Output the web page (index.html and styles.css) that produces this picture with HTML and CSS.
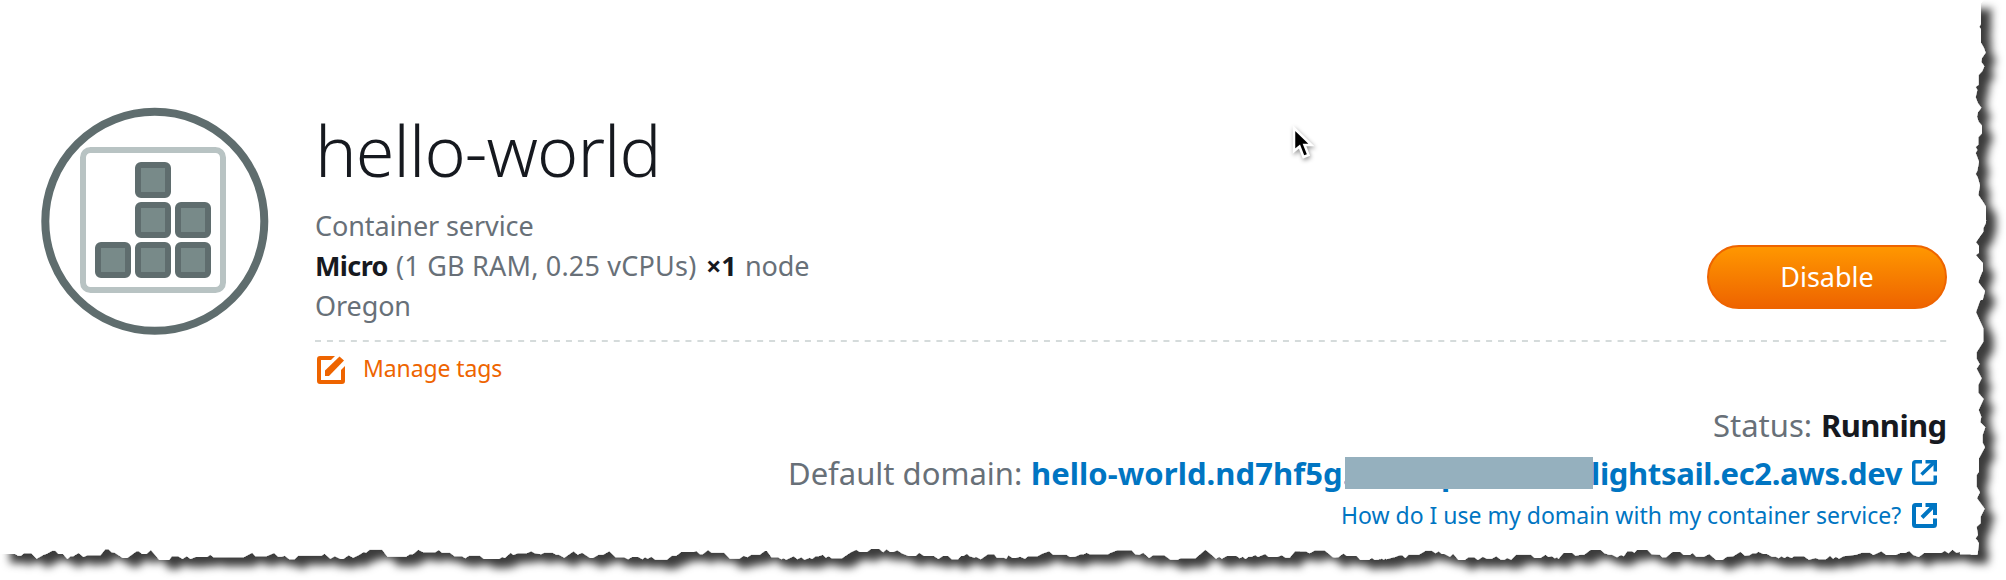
FILE: index.html
```html
<!DOCTYPE html>
<html lang="en">
<head>
<meta charset="utf-8">
<title>hello-world</title>
<link rel="stylesheet" href="styles.css">
</head>
<body>
<svg class="paper" width="2006" height="580" viewBox="0 0 2006 580" aria-hidden="true">
  <defs><filter id="shadow" filterUnits="userSpaceOnUse" x="-30" y="-30" width="2060" height="640"><feDropShadow dx="10" dy="9" stdDeviation="4" flood-color="#000" flood-opacity=".77"/></filter></defs>
  <g filter="url(#shadow)" fill="#fff">
    <path d="M0 0H1975V549H0Z"/>
    <path transform="translate(1940 0) scale(.3333)" d="M60 0H131L123 10V72L118 80L123 88V128L132 144L137 158L126 174L124 186L133 199L127 213L116 225V254L107 261L112 270L107 292L114 310L124 323L114 337L111 350L116 365L126 377V400L115 412V434L107 441L112 450L107 459L112 472L117 485L112 512L107 522L113 532L120 556L115 585L129 605L138 620V668L130 685V695L107 726L117 738V758L107 766L129 790V812L122 820L115 847L135 873L128 900H60Z"/>
    <path transform="translate(1660 220) scale(.3333)" d="M900 0H979L969 18V35L947 68L957 86L947 105L968 130V152L954 187L974 213L958 248L948 277L970 325V365L950 397V416L959 432L950 446L965 475L955 495V518L971 537L956 570L964 590L961 607L976 622L968 645V668L975 682L957 715V755L950 765V800L960 817L951 835L974 866L962 890V910L950 920L954 945L947 955L957 970L953 1003H900Z"/>
    <path transform="translate(0 530) scale(.4464 .3333)" d="M0 30V72H34L40 77H47L54 70H70L82 86L98 74L105 71L117 62H124L131 72H141L151 87L158 79L164 79L176 69L187 81L196 76H225L236 58H243L250 67L257 68L275 84H285L306 64H311L318 72H328L338 60L357 90H379L385 79H399L409 87L418 79L427 87L438 81H464L471 74L478 82H546L565 68L572 79H597L614 69L623 80H631L638 77L648 88H660L668 77H720L727 71L740 86L750 79L763 87H769L781 76L791 83L803 76L815 66L820 68L828 59H856L868 80H910L918 73H925L937 59L948 67H975L983 60L990 68H1008L1018 79H1035L1042 85L1051 77H1075L1084 87H1118L1125 81L1131 84L1144 68L1150 75L1160 70H1180L1190 64L1198 70L1212 73L1219 68H1238L1246 74H1252L1264 83L1285 64L1294 74L1304 68L1322 84H1328L1341 74H1351L1365 64L1379 82H1398L1407 88L1416 81H1430L1439 88L1445 82L1451 86L1459 80L1468 89H1494L1505 77H1515L1526 66H1554L1560 63L1568 73V30Z"/>
    <path transform="translate(700 530) scale(.4464 .3333)" d="M0 30V73H6L18 60L26 68H54L67 86H88L98 77L106 82L115 74H134L145 63H150L160 82H175L182 88L187 85L193 89L210 79L218 88L227 82L234 89L246 83L251 87L259 79H266L275 74L282 83L288 79L295 85H318L338 67L350 59L358 66H374L383 57H402L410 67L418 58L426 66H433L442 61L452 70L467 78H483L491 68L502 78H524L534 87L544 78H556L564 88H578L585 78H590L598 71L604 79L615 83L618 80L629 88L645 73H659L665 83H681L686 86L691 76L700 84H707L717 80L728 86L735 79H756L766 71L782 64L791 74H821L829 81L840 80L853 73H860L866 68L873 73H914L920 68L935 61H967L975 73L984 74L993 68L1006 84L1015 76H1040L1054 89H1070L1077 85H1110L1121 72L1132 59L1144 72L1156 86L1163 80L1169 86L1180 78H1202L1209 85L1216 80L1222 87L1229 80H1236L1244 75L1250 81L1259 76L1266 72L1274 81H1293L1303 76L1312 83H1321L1333 64H1358L1363 68L1370 67L1377 61H1399L1418 82H1425L1441 70L1449 78H1473L1479 89H1499L1505 83L1511 89H1520L1525 84L1532 89L1538 82H1556L1568 75V30Z"/>
    <path transform="translate(1300 530) scale(.4503 .3333)" d="M0 30V64H14L21 70L33 61H55L76 82H85L97 70L107 78H126L134 89H153L160 83L167 89L173 84L179 88L185 81L192 88L204 83L216 76H227L234 84L241 74H264L279 62H293L301 70L308 64L315 72H321L333 80L340 71L352 90H366L374 82H387L395 90L406 80L415 86H426L436 79L446 89H454L460 84L469 89L480 74H513L521 84H534L545 74L552 81L559 79L566 85L571 82L574 87L585 69H605L612 77L624 74H631L645 60H668L676 70L686 74H693L704 82L713 75L719 79L727 64H737L743 68L748 60H772L781 73L799 74L804 82H813L827 66H845L852 75H866L872 69L880 80H897L909 72L924 90H938L948 80L962 79L978 65L988 77L998 76L1005 70H1013L1018 65L1029 72H1037L1048 80H1057L1063 85L1069 79L1076 84L1082 79L1092 84L1097 79H1119L1130 89L1145 84L1152 88H1168L1177 77L1184 86L1190 80L1197 86L1207 79L1235 74L1248 68H1266L1273 75L1283 69L1291 64L1302 75H1323L1333 69H1344L1353 63L1362 75L1374 81L1386 69H1424L1432 62L1440 70L1449 59L1458 68L1467 65L1475 69L1482 67L1491 74H1504V30Z"/>
  </g>
</svg>
<main class="service">
  <svg class="logo" width="228" height="228" viewBox="0 0 228 228" aria-hidden="true">
    <circle cx="113.8" cy="114.300" r="109.5" fill="none" stroke="#5f6d6e" stroke-width="8"/>
    <rect x="42" y="43" width="140" height="140" rx="7.5" fill="none" stroke="#b8c3c3" stroke-width="6"/>
    <g fill="#788a89" stroke="#5f6d6e" stroke-width="6">
      <rect x="97" y="58" width="30" height="30" rx="3"/><rect x="97" y="98" width="30" height="30" rx="3"/><rect x="137" y="98" width="30" height="30" rx="3"/>
      <rect x="57" y="138" width="30" height="30" rx="3"/><rect x="97" y="138" width="30" height="30" rx="3"/><rect x="137" y="138" width="30" height="30" rx="3"/>
    </g>
  </svg>
  <div class="content">
    <header class="head">
      <div class="summary">
        <h1 class="title">hello-world</h1>
        <p class="line kind">Container service</p>
        <p class="line plan"><b class="micro">Micro</b> <span class="specs">(1 GB RAM, 0.25 vCPUs)</span> <b class="count">×1</b> <span class="node">node</span></p>
        <p class="line region">Oregon</p>
      </div>
      <button class="disable">Disable</button>
    </header>
    <svg class="rule" width="1632" height="2" aria-hidden="true"><path d="M0 1H1632" stroke="#d5dbdb" stroke-width="2" stroke-dasharray="6 5.95"/></svg>
    <a class="tags">
      <svg width="28" height="28" viewBox="0 0 28 28" aria-hidden="true"><path d="M3 0H18L14 4H4V24H24V14L28 10V25Q28 28 25 28H3Q0 28 0 25V3Q0 0 3 0Z" fill="#ee6400"/><path d="M8 20V14.500L22.500 0.500L27 4.500L12 20Z" fill="#ee6400"/></svg>
      <span class="tags-label">Manage tags</span>
    </a>
    <section class="details">
      <p class="detail status"><span class="status-key">Status:</span><b class="running">Running</b></p>
      <p class="detail domain"><span class="domain-key">Default domain:</span><a class="host"><span class="host-start">hello-world.nd7hf5g.</span><span class="mask"><span class="mask-text">p</span></span><span class="host-end">lightsail.ec2.aws.dev</span></a>
        <svg class="ext" width="25" height="25" viewBox="0 0 25 25" aria-hidden="true"><path d="M10 1.750H3.500Q1.750 1.750 1.750 3.500V21.500Q1.750 23.250 3.500 23.250H21.500Q23.250 23.250 23.250 21.500V15.500M9.500 14.500L21.500 3" fill="none" stroke="#0075c2" stroke-width="3.500"/><path d="M13.500 0H25V11.500H21.500V3.500H13.500Z" fill="#0075c2"/></svg></p>
      <p class="detail help"><a class="help-label">How do I use my domain with my container service?</a>
        <svg class="ext" width="25" height="25" viewBox="0 0 25 25" aria-hidden="true"><path d="M10 2H3.500Q2 2 2 3.500V21.500Q2 23 3.500 23H21.500Q23 23 23 21.500V15.500M10 14.500L21.500 3" fill="none" stroke="#0075c2" stroke-width="4"/><path d="M13.500 0H25V12H21V4H13.500Z" fill="#0075c2"/></svg></p>
    </section>
  </div>
</main>
<svg class="cursor" width="32" height="44" viewBox="0 0 32 44" aria-hidden="true"><path d="M4 4V27L9.500 22.500L13.500 33L18.500 31L14.500 21H21.500Z" fill="#000" stroke="#fff" stroke-width="2.500"/></svg>
</body>
</html>
```
FILE: styles.css
```css
* { box-sizing: border-box; }
body { margin: 0; width: 2006px; height: 580px; overflow: hidden; background: #fff; color: #687078; font-family: "Noto Sans", "Open Sans", sans-serif; }
h1, p { margin: 0; }
b { color: #16191f; font-weight: 700; }
.paper { position: absolute; top: 0; left: 0; z-index: -1; }
.service { display: flex; align-items: flex-start; padding: 107px 59px 0 41px; }
.logo { flex: none; }
.content { width: 1632px; margin-left: 46px; }
.head { display: flex; justify-content: space-between; align-items: flex-end; height: 233px; padding-bottom: 14px; }
.title { height: 101px; line-height: 90px; color: #16191f; font-size: 70px; font-weight: 300; letter-spacing: -.9px; white-space: nowrap; }
.line { height: 40px; line-height: 40px; font-size: 27px; letter-spacing: -.1px; white-space: nowrap; }
.plan { display: flex; }
.micro { width: 81px; letter-spacing: -.6px; }
.specs { width: 310px; letter-spacing: .2px; }
.count { width: 39px; }
.disable { width: 240px; height: 64px; margin-bottom: 17px; padding: 0; border: 2px solid #ee6400; border-radius: 32px; background: linear-gradient(#ff9700, #ee6400); color: #fff; font: 27px/60px "Noto Sans", sans-serif; }
.rule { display: block; }
.tags { display: flex; align-items: center; height: 56px; padding: 0 0 1px 2px; gap: 18px; color: #ee6400; font-size: 23px; letter-spacing: -.1px; white-space: nowrap; }
.tags-label { margin-top: -3px; }
.details { display: flex; flex-direction: column; align-items: flex-end; }
.detail { display: flex; align-items: center; font-size: 31px; white-space: nowrap; }
.status { height: 54px; }
.status-key { width: 108px; }
.running { width: 126px; letter-spacing: -.6px; }
.domain { height: 41px; padding-right: 10px; }
.domain-key { width: 243px; }
.host { display: flex; align-items: center; color: #0075c2; font-weight: 700; }
.host-start { width: 314px; letter-spacing: .05px; }
.mask { position: relative; z-index: 1; width: 248px; height: 48px; padding-left: 96px; line-height: 48px; }
.mask::after { content: ""; position: absolute; left: 0; right: 0; top: 8px; height: 32px; background: #95b0be; }
.host-end { width: 321px; margin-left: -2px; letter-spacing: -.35px; }
.help { height: 45px; padding-right: 10px; color: #0075c2; font-size: 23px; }
.help-label { width: 571px; margin-top: -1px; }
.cursor { position: absolute; left: 1290px; top: 124px; filter: drop-shadow(1px 2px 2px rgba(0,0,0,.4)); }
```
